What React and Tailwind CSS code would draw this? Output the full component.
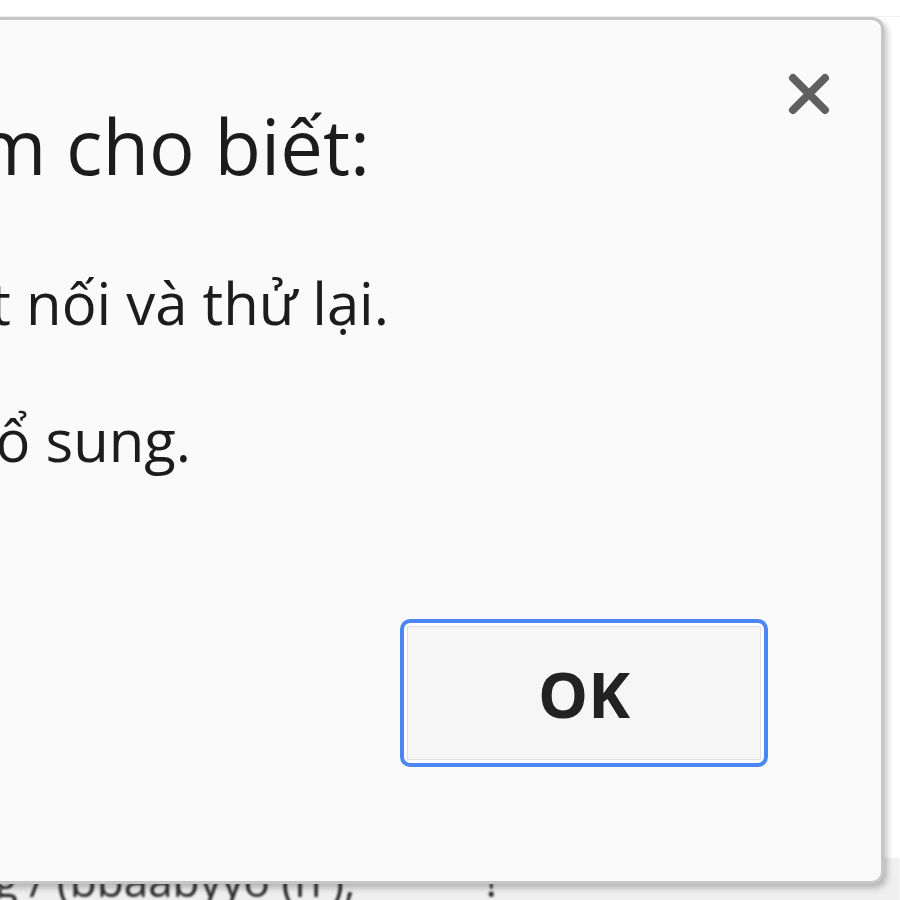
import React from 'react';

const CloseIcon = () => (
    <svg width="44" height="44" viewBox="0 0 44 44" className="blur-[0.6px]">
        <path d="M6 6 L38 38 M38 6 L6 38" stroke="#606060" strokeWidth="8" strokeLinecap="round" />
    </svg>
);

const App = () => {
    return (
        <div className="w-[900px] h-[900px] overflow-hidden bg-white font-['Open_Sans','Noto_Sans',sans-serif] text-[#1c1c1c]">
            <div className="h-[17px] border-b border-[#f2f2f2]" />
            {/* alert dialog, left part runs off the screen */}
            <div className="relative z-10 w-[884px] h-[867px] bg-[#fafafa] border-[3px] border-l-0 border-[#c6c6c6] rounded-r-[12px] shadow-[3px_4px_6px_rgba(0,0,0,0.25)] flex flex-col">
                <div className="flex justify-between items-start">
                    <div className="w-[370px] mt-[88px] flex justify-end whitespace-nowrap text-[76px] leading-none">
                        <span>Trang web tại example.com cho biết:</span>
                    </div>
                    <div className="mt-[52px] mr-[50px]">
                        <CloseIcon />
                    </div>
                </div>
                <div className="w-[389px] mt-[90px] flex justify-end whitespace-nowrap text-[58px] leading-none">
                    <span>Vui lòng kiểm tra kết nối và thử lại.</span>
                </div>
                <div className="w-[191px] mt-[79px] flex justify-end whitespace-nowrap text-[58px] leading-none">
                    <span>Liên hệ để biết thông tin bổ sung.</span>
                </div>
                <div className="flex justify-end mt-[150px] mr-[113px]">
                    <button className="w-[368px] h-[148px] rounded-[10px] border-[4px] border-[#4a87f2] p-[3px] bg-white">
                        <div className="w-full h-full border border-[#e2e2e2] bg-[#f6f6f6] flex items-center justify-center text-[63px] font-bold text-[#222] leading-none">
                            OK
                        </div>
                    </button>
                </div>
            </div>
            <div className="-mt-[26px] h-[45px] bg-[#efefef] flex items-start whitespace-nowrap text-[44px] leading-none text-[#2a2a2a] blur-[0.8px]">
                <span className="-ml-[6px]">g / (bbaabyyo (n'),</span>
                <span className="ml-[130px]">!</span>
            </div>
        </div>
    );
};

export default App;
